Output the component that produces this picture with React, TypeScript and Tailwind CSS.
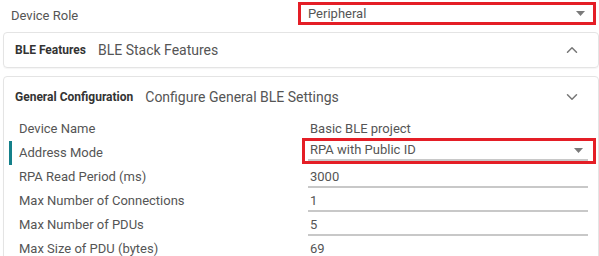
import React from 'react';
import { ChevronUp, ChevronDown } from 'lucide-react';

const rows = [
  { label: 'Device Name', value: 'Basic BLE project' },
  { label: 'Address Mode', value: 'RPA with Public ID', select: true, active: true },
  { label: 'RPA Read Period (ms)', value: '3000' },
  { label: 'Max Number of Connections', value: '1' },
  { label: 'Max Number of PDUs', value: '5' },
  { label: 'Max Size of PDU (bytes)', value: '69' },
];

function Caret() {
  return (
    <svg width="9" height="5" viewBox="0 0 9 5" className="shrink-0">
      <path d="M0 0h9L4.5 5z" fill="#7a7a7a" />
    </svg>
  );
}

function Field({ value, select }: { value: string; select?: boolean }) {
  return (
    <div className="flex h-[20px] items-center justify-between border-b-2 border-[#c8c8c8] pl-[2px] pr-[5px] text-[13px] text-[#555]">
      <span>{value}</span>
      {select && <Caret />}
    </div>
  );
}

export default function App() {
  return (
    <div className="h-[256px] w-[599px] overflow-hidden bg-white font-['Roboto','Liberation_Sans',sans-serif] text-[#555]">
      {/* Device role */}
      <div className="flex h-[28px] items-start pt-[2px]">
        <div className="w-[298px] pl-[11px] pt-[4px] text-[13px] text-[#555]">Device Role</div>
        <div className="flex h-[23px] w-[298px] items-center justify-between border-[3px] border-[#e41e26] pl-[7px] pr-[8px] text-[13px] text-[#555]">
          <span>Peripheral</span>
          <Caret />
        </div>
      </div>

      {/* BLE features card */}
      <div className="ml-[3px] mt-[4px] flex h-[36px] items-center rounded-[4px] border border-[#e4e4e4] pl-[11px] pr-[17px] shadow-[0_1px_1px_rgba(0,0,0,0.04)]">
        <span className="text-[12px] font-bold text-[#333]">BLE Features</span>
        <span className="ml-[12px] text-[14px] text-[#555]">BLE Stack Features</span>
        <ChevronUp size={18} strokeWidth={2} className="ml-auto text-[#777]" />
      </div>

      {/* General configuration card */}
      <div className="ml-[3px] mt-[8px] rounded-[4px] border border-[#e4e4e4] pb-[10px] shadow-[0_1px_1px_rgba(0,0,0,0.04)]">
        <div className="flex h-[40px] items-center pl-[11px] pr-[17px]">
          <span className="text-[12px] font-bold text-[#333]">General Configuration</span>
          <span className="ml-[12px] text-[14px] text-[#555]">Configure General BLE Settings</span>
          <ChevronDown size={18} strokeWidth={2} className="ml-auto text-[#777]" />
        </div>
        {rows.map((r) => (
          <div key={r.label} className="flex h-[24px] items-center">
            <div className={`ml-[5px] h-[24px] w-[3px] ${r.active ? 'bg-[#14808a]' : ''}`} />
            <div className="w-[288px] pl-[7px] text-[13px] text-[#555]">{r.label}</div>
            {r.select ? (
              <div className="-mt-[4px] ml-[2px] h-[26px] w-[294px] border-[3px] border-[#e41e26] pl-[3px] pr-[5px]">
                <Field value={r.value} select />
              </div>
            ) : (
              <div className="ml-[8px] w-[280px] pt-[2px]">
                <Field value={r.value} />
              </div>
            )}
          </div>
        ))}
      </div>
    </div>
  );
}
